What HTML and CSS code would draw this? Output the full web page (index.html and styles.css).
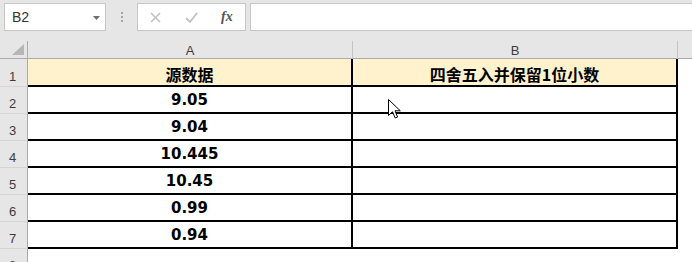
FILE: index.html
```html
<!DOCTYPE html>
<html lang="zh-CN">
<head>
    <meta charset="UTF-8" />
    <title>四舍五入</title>
    <link rel="stylesheet" href="styles.css">
</head>
<body>

    <!-- Formula bar -->
    <div class="toolbar">
        <div class="namebox">
            <span>B2</span>
            <svg class="drop" width="7" height="4" viewBox="0 0 7 4"><path d="M0 0H7L3.5 4Z" fill="#6f6f6f"/></svg>
        </div>
        <div class="grip"><i></i><i></i><i></i></div>
        <div class="fxbtns">
            <svg width="11" height="11" viewBox="0 0 11 11"><path d="M1 1L10 10M10 1L1 10" stroke="#c2c2c2" stroke-width="1.6"/></svg>
            <svg width="13" height="11" viewBox="0 0 13 11"><path d="M1 6L5 10L12 1" stroke="#c2c2c2" stroke-width="1.8" fill="none"/></svg>
            <span class="fx">fx</span>
        </div>
        <div class="fxinput"></div>
    </div>

    <!-- Sheet -->
    <div class="sheet">
        <div class="corner"><svg width="12" height="11" viewBox="0 0 12 11"><path d="M12 0V11H0Z" fill="#b6b6b6"/></svg></div>
        <div class="colhead">A</div>
        <div class="colhead">B</div>
        <div class="colhead rest"></div>

        <div class="rowhead">1</div>
        <div class="cell title">源数据</div>
        <div class="cell title">四舍五入并保留1位小数</div>
        <div class="blank"></div>

        <div class="rowhead">2</div>
        <div class="cell num">9.05</div>
        <div class="cell"></div>
        <div class="blank"></div>

        <div class="rowhead">3</div>
        <div class="cell num">9.04</div>
        <div class="cell"></div>
        <div class="blank"></div>

        <div class="rowhead">4</div>
        <div class="cell num">10.445</div>
        <div class="cell"></div>
        <div class="blank"></div>

        <div class="rowhead">5</div>
        <div class="cell num">10.45</div>
        <div class="cell"></div>
        <div class="blank"></div>

        <div class="rowhead">6</div>
        <div class="cell num">0.99</div>
        <div class="cell"></div>
        <div class="blank"></div>

        <div class="rowhead">7</div>
        <div class="cell num">0.94</div>
        <div class="cell"></div>
        <div class="blank"></div>

        <div class="rowhead">8</div>
        <div class="blank"></div>
        <div class="blank"></div>
        <div class="blank"></div>

        <!-- mouse pointer -->
        <svg class="pointer" width="13" height="20" viewBox="0 0 13 20">
            <path d="M0.5 0.5V16.5L4.5 12.8L7.2 19L9.6 18L7 11.8H12.3Z" fill="#fff" stroke="#000" stroke-width="1"/>
        </svg>
    </div>

</body>
</html>
```

FILE: styles.css
```css
/* --- Page --- */
body {
    margin: 0;
    background: #e6e6e6;
    font-family: "Liberation Sans", Arial, sans-serif;
    overflow: hidden;
}

/* --- Formula bar --- */
.toolbar {
    display: flex;
    align-items: center;
    padding: 3px 0 10px 4px;
    height: 28px;
}

.namebox {
    box-sizing: border-box;
    width: 102px;
    height: 28px;
    background: #fff;
    border: 1px solid #c6c6c6;
    display: flex;
    align-items: center;
    justify-content: space-between;
    padding: 0 5px 0 7px;
    font-size: 14px;
    color: #333;
}

.namebox .drop {
    margin-top: 1px;
}

.grip {
    width: 31px;
    display: flex;
    flex-direction: column;
    align-items: center;
    gap: 2px;
}

.grip i {
    display: block;
    width: 2px;
    height: 2px;
    background: #a3a3a3;
}

.fxbtns {
    box-sizing: border-box;
    width: 109px;
    height: 28px;
    background: #fff;
    border: 1px solid #c6c6c6;
    display: flex;
    align-items: center;
    padding: 0 0 0 12px;
    gap: 24px;
}

.fx {
    font-family: "Liberation Serif", serif;
    font-style: italic;
    font-weight: bold;
    font-size: 14px;
    color: #555;
    margin-left: -1px;
}

.fxinput {
    flex: 1;
    box-sizing: border-box;
    height: 28px;
    margin-left: 4px;
    background: #fff;
    border: 1px solid #c6c6c6;
    border-right: none;
}

/* --- Sheet grid --- */
.sheet {
    position: relative;
    height: 221px;
    overflow: hidden;
    display: grid;
    grid-template-columns: 28px 325px 325px 1fr;
    grid-template-rows: 18px 28px repeat(6, 27px) 27px;
    background: #fff;
}

.sheet > div {
    box-sizing: border-box;
}

.corner {
    background: #e6e6e6;
    border-right: 1px solid #ababab;
    border-bottom: 1px solid #ababab;
    display: flex;
    align-items: flex-end;
    justify-content: flex-end;
    padding: 0 3px 3px 0;
}

.colhead {
    background: #e6e6e6;
    border-right: 1px solid #c4c4c4;
    border-bottom: 1px solid #ababab;
    font-size: 13px;
    color: #3c3c3c;
    text-align: center;
    line-height: 18px;
    padding-top: 1px;
}

.colhead.rest {
    border-right: none;
}

.rowhead {
    background: #e6e6e6;
    border-right: 1px solid #ababab;
    border-bottom: 1px solid #d5d5d5;
    font-size: 13px;
    color: #3c3c3c;
    display: flex;
    align-items: flex-end;
    justify-content: center;
    padding-bottom: 2px;
    padding-right: 2px;
}

.cell {
    border-right: 2px solid #000;
    border-bottom: 2px solid #000;
    display: flex;
    align-items: center;
    justify-content: center;
    color: #000;
    font-weight: bold;
}

.cell.title {
    background: #fff2cc;
    font-family: "Noto Sans CJK SC", sans-serif;
    font-size: 16px;
    line-height: 18px;
    padding-top: 4px;
}

.cell.num {
    font-family: "DejaVu Sans", sans-serif;
    font-size: 15px;
    line-height: 18px;
}

.blank {
    background: #fff;
}

.pointer {
    position: absolute;
    left: 388px;
    top: 58px;
}
```
